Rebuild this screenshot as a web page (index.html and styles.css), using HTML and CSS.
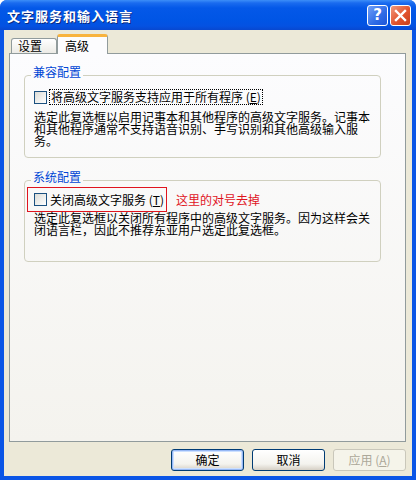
FILE: index.html
```html
<!DOCTYPE html>
<html lang="zh-CN">
<head>
<meta charset="utf-8">
<title>文字服务和输入语言</title>
<link rel="stylesheet" href="styles.css">
</head>
<body>
<div class="window">
  <div class="titlebar">
    <span class="title">文字服务和输入语言</span>
    <div class="controls">
      <div class="cbtn help">?</div>
      <div class="cbtn close">
        <svg width="13" height="13" viewBox="0 0 13 13"><path d="M2 2 L11 11 M11 2 L2 11" stroke="#fff" stroke-width="2.4" stroke-linecap="square"/></svg>
      </div>
    </div>
  </div>
  <div class="client">
    <div class="tabs">
      <div class="tab">设置</div>
      <div class="tab active">高级</div>
    </div>
    <div class="panel">
      <fieldset class="group g1">
        <legend>兼容配置</legend>
        <div class="row">
          <span class="check"></span>
          <span class="label focus">将高级文字服务支持应用于所有程序 (<u>E</u>)</span>
        </div>
        <p class="desc">选定此复选框以启用记事本和其他程序的高级文字服务。记事本和其他程序通常不支持语音识别、手写识别和其他高级输入服务。</p>
      </fieldset>
      <fieldset class="group g2">
        <legend>系统配置</legend>
        <div class="annot">
          <div class="row redbox">
            <span class="check"></span>
            <span class="label">关闭高级文字服务 (<u>T</u>)</span>
          </div>
          <span class="note">这里的对号去掉</span>
        </div>
        <p class="desc">选定此复选框以关闭所有程序中的高级文字服务。因为这样会关闭语言栏，因此不推荐东亚用户选定此复选框。</p>
      </fieldset>
    </div>
    <div class="buttons">
      <div class="btn default">确定</div>
      <div class="btn">取消</div>
      <div class="btn disabled">应用 (<u>A</u>)</div>
    </div>
  </div>
</div>
</body>
</html>
```
FILE: styles.css
```css
* { box-sizing: border-box; }
html, body { margin: 0; padding: 0; background: #ffffff; }
body {
  font-family: "Noto Sans CJK SC", "Noto Sans", sans-serif;
  font-size: 12px;
  color: #000;
}
.window {
  width: 416px;
  height: 480px;
  display: flex;
  flex-direction: column;
  background: #0A55E6;
  border-radius: 7px 7px 0 0;
  overflow: hidden;
}
.titlebar {
  height: 30px;
  flex: none;
  display: flex;
  align-items: center;
  justify-content: space-between;
  padding: 0 5px 0 7px;
  background: linear-gradient(#3C8EF8 0px, #1A6BEF 3px, #0458E8 8px, #0055E5 20px, #0452E2 26px, #0848D0 30px);
}
.title {
  color: #fff;
  font-weight: bold;
  font-size: 13px;
  letter-spacing: 1px;
  text-shadow: 1px 1px 0 #0A2A80;
}
.controls { display: flex; gap: 2px; }
.cbtn {
  width: 21px;
  height: 21px;
  border: 1px solid #fff;
  border-radius: 3px;
  display: flex;
  align-items: center;
  justify-content: center;
  color: #fff;
  font-family: "DejaVu Sans", sans-serif;
  font-weight: bold;
  font-size: 15px;
}
.help { background: linear-gradient(135deg, #6FA0F8, #2F6BE6 60%, #1E55D8); }
.close { background: linear-gradient(135deg, #F19A7E, #E2542E 55%, #C7401C); }

.client {
  flex: 1;
  margin: 0 4px 4px;
  background: #ECE9D8;
  padding: 4px 6px 0 5px;
  display: flex;
  flex-direction: column;
}
.tabs {
  height: 19px;
  display: flex;
  align-items: flex-end;
  position: relative;
  z-index: 1;
}
.tab {
  height: 15px;
  width: 46px;
  margin-left: 2px;
  padding-left: 6px;
  line-height: 14px;
  border: 1px solid #919B9C;
  border-bottom: none;
  border-radius: 3px 3px 0 0;
  background: linear-gradient(#FFFFFF, #ECEBE6);
}
.tab.active {
  height: 20px;
  width: 51px;
  margin-left: 0;
  margin-bottom: -1px;
  padding-left: 7px;
  line-height: 17px;
  border-top: 3px solid #F8B33E;
  background: #FCFCFE;
}
.panel {
  height: 389px;
  flex: none;
  border: 1px solid #919B9C;
  background: linear-gradient(#FCFCFE, #F4F3EE);
  padding: 11px 0 0 14px;
}
.group {
  width: 357px;
  min-width: 0;
  margin: 0;
  border: 1px solid #D0D0BF;
  border-radius: 4px;
  padding: 0 6px 10px 9px;
}
.group legend {
  color: #0046D5;
  line-height: 14px;
  padding: 0 2px 6px;
  margin-left: -3px;
}
.g2 { margin-top: 12px; padding-bottom: 25px; }
.row {
  display: flex;
  align-items: center;
  height: 16px;
  gap: 3px;
}
.g1 .row { margin-top: 4px; }
.check {
  width: 13px;
  height: 13px;
  flex: none;
  border: 1px solid #1C5180;
  background: linear-gradient(135deg, #DCDCD7, #FFFFFF);
}
.label { line-height: 14px; white-space: nowrap; }
.label.focus { outline: 1px dotted #000; outline-offset: 0; padding: 0 1px; }
.desc {
  margin: 6px 0 0;
  line-height: 12px;
  width: 340px;
}
.g2 .desc { margin-top: 0; }
.annot {
  display: flex;
  align-items: center;
  margin: -3px 0 0 -7px;
  height: 25px;
}
.redbox {
  height: 25px;
  border: 1px solid #E0141E;
  padding: 0 6px 0 6px;
  width: 140px;
}
.note {
  color: #E0141E;
  margin-left: 9px;
  line-height: 14px;
}
.buttons {
  display: flex;
  justify-content: flex-end;
  gap: 8px;
  margin-top: 7px;
}
.btn {
  width: 73px;
  height: 22px;
  border: 1px solid #003C74;
  border-radius: 3px;
  background: linear-gradient(#FFFFFF, #F4F3EE 70%, #D6D0C5);
  text-align: center;
  line-height: 19px;
}
.btn.default { box-shadow: inset 0 0 0 1px #97B8F5, inset 0 0 0 2px #CCE0FF; }
.btn.disabled {
  border-color: #C9C7BA;
  background: #F5F4EA;
  color: #ACA899;
}
```
